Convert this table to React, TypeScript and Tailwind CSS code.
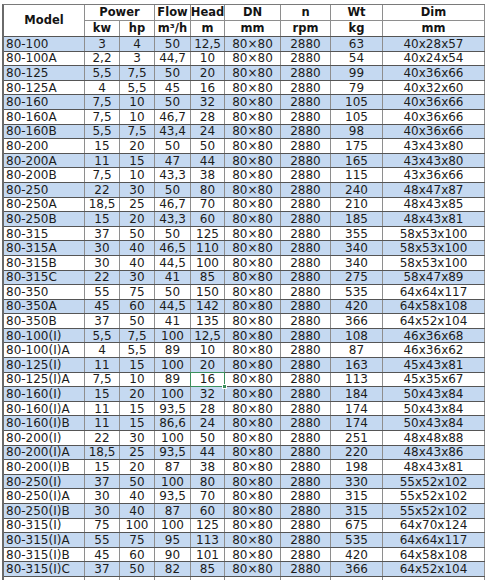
import React from "react";

type Row = [string, string, string, string, string, string];

const rows: Row[] = [
  ["80-100", "3", "4", "50", "12,5", "63|40x28x57"],
  ["80-100A", "2,2", "3", "44,7", "10", "54|40x24x54"],
  ["80-125", "5,5", "7,5", "50", "20", "99|40x36x66"],
  ["80-125A", "4", "5,5", "45", "16", "79|40x32x60"],
  ["80-160", "7,5", "10", "50", "32", "105|40x36x66"],
  ["80-160A", "7,5", "10", "46,7", "28", "105|40x36x66"],
  ["80-160B", "5,5", "7,5", "43,4", "24", "98|40x36x66"],
  ["80-200", "15", "20", "50", "50", "175|43x43x80"],
  ["80-200A", "11", "15", "47", "44", "165|43x43x80"],
  ["80-200B", "7,5", "10", "43,3", "38", "115|43x36x66"],
  ["80-250", "22", "30", "50", "80", "240|48x47x87"],
  ["80-250A", "18,5", "25", "46,7", "70", "210|48x43x85"],
  ["80-250B", "15", "20", "43,3", "60", "185|48x43x81"],
  ["80-315", "37", "50", "50", "125", "355|58x53x100"],
  ["80-315A", "30", "40", "46,5", "110", "340|58x53x100"],
  ["80-315B", "30", "40", "44,5", "100", "340|58x53x100"],
  ["80-315C", "22", "30", "41", "85", "275|58x47x89"],
  ["80-350", "55", "75", "50", "150", "535|64x64x117"],
  ["80-350A", "45", "60", "44,5", "142", "420|64x58x108"],
  ["80-350B", "37", "50", "41", "135", "366|64x52x104"],
  ["80-100(I)", "5,5", "7,5", "100", "12,5", "108|46x36x68"],
  ["80-100(I)A", "4", "5,5", "89", "10", "87|46x36x62"],
  ["80-125(I)", "11", "15", "100", "20", "163|45x43x81"],
  ["80-125(I)A", "7,5", "10", "89", "16", "113|45x35x67"],
  ["80-160(I)", "15", "20", "100", "32", "184|50x43x84"],
  ["80-160(I)A", "11", "15", "93,5", "28", "174|50x43x84"],
  ["80-160(I)B", "11", "15", "86,6", "24", "174|50x43x84"],
  ["80-200(I)", "22", "30", "100", "50", "251|48x48x88"],
  ["80-200(I)A", "18,5", "25", "93,5", "44", "220|48x43x86"],
  ["80-200(I)B", "15", "20", "87", "38", "198|48x43x81"],
  ["80-250(I)", "37", "50", "100", "80", "330|55x52x102"],
  ["80-250(I)A", "30", "40", "93,5", "70", "315|55x52x102"],
  ["80-250(I)B", "30", "40", "87", "60", "315|55x52x102"],
  ["80-315(I)", "75", "100", "100", "125", "675|64x70x124"],
  ["80-315(I)A", "55", "75", "95", "113", "535|64x64x117"],
  ["80-315(I)B", "45", "60", "90", "101", "420|64x58x108"],
  ["80-315(I)C", "37", "50", "82", "85", "366|64x52x104"],
];

const colW = [
  "w-[81px]",
  "w-[35px]",
  "w-[35px]",
  "w-[36px]",
  "w-[34px]",
  "w-[56px]",
  "w-[50px]",
  "w-[52px]",
  "w-[102px]",
];

const vline = "border-r border-[#8e8e8e]";

function DataRow({ cells, blue, selected }: { cells: string[]; blue: boolean; selected?: boolean }) {
  return (
    <div
      className={`flex h-[14.6px] shrink-0 border-b border-[#555555] ${
        blue ? "bg-[#c5d9f1]" : "bg-white"
      }`}
    >
      {cells.map((c, j) => (
        <div
          key={j}
          className={`${colW[j]} shrink-0 ${vline} flex items-center leading-[14px] ${
            j === 0 ? "justify-start pl-[2px]" : "justify-center"
          } ${j === 4 && selected ? "relative" : ""}`}
        >
          {c}
          {j === 4 && selected ? (
            <div className="pointer-events-none absolute -left-[1px] -top-[1px] -right-[1px] -bottom-[1px] z-10 border border-[#3c8f5c]">
              <div className="absolute -right-[3px] -bottom-[3px] h-[5px] w-[5px] bg-[#3c8f5c] border border-white" />
            </div>
          ) : null}
        </div>
      ))}
    </div>
  );
}

export default function App() {
  return (
    <div className="h-[580px] w-[488px] overflow-hidden bg-white pt-[4px] pl-[2px] font-['DejaVu_Sans','Verdana',sans-serif] text-[#1c1c1c]">
      <div className="w-[483px] border-l-2 border-t border-l-[#6a6a6a] border-t-[#7a7a7a]">
        {/* header */}
        <div className="flex h-[32px] border-b border-[#555555] bg-white text-[11.5px] font-bold text-[#141414]">
          <div className={`${colW[0]} shrink-0 ${vline} flex items-center justify-center`}>Model</div>
          <div className="flex flex-col">
            <div className="flex h-[16px] border-b border-[#8e8e8e]">
              <div className={`w-[70px] shrink-0 ${vline} flex items-center justify-center`}>Power</div>
              <div className={`${colW[3]} shrink-0 ${vline} flex items-center justify-center`}>Flow</div>
              <div className={`${colW[4]} shrink-0 ${vline} flex items-center justify-center`}>Head</div>
              <div className={`${colW[5]} shrink-0 ${vline} flex items-center justify-center`}>DN</div>
              <div className={`${colW[6]} shrink-0 ${vline} flex items-center justify-center`}>n</div>
              <div className={`${colW[7]} shrink-0 ${vline} flex items-center justify-center`}>Wt</div>
              <div className={`${colW[8]} shrink-0 ${vline} flex items-center justify-center`}>Dim</div>
            </div>
            <div className="flex h-[15px]">
              <div className={`${colW[1]} shrink-0 ${vline} flex items-center justify-center`}>kw</div>
              <div className={`${colW[2]} shrink-0 ${vline} flex items-center justify-center`}>hp</div>
              <div className={`${colW[3]} shrink-0 ${vline} flex items-center justify-center`}>m³/h</div>
              <div className={`${colW[4]} shrink-0 ${vline} flex items-center justify-center`}>m</div>
              <div className={`${colW[5]} shrink-0 ${vline} flex items-center justify-center`}>mm</div>
              <div className={`${colW[6]} shrink-0 ${vline} flex items-center justify-center`}>rpm</div>
              <div className={`${colW[7]} shrink-0 ${vline} flex items-center justify-center`}>kg</div>
              <div className={`${colW[8]} shrink-0 ${vline} flex items-center justify-center`}>mm</div>
            </div>
          </div>
        </div>
        {/* body */}
        <div className="flex flex-col text-[12px]">
          {rows.map((r, i) => {
            const [wt, dim] = r[5].split("|");
            const cells = [r[0], r[1], r[2], r[3], r[4], "80×80", "2880", wt, dim];
            return <DataRow key={i} cells={cells} blue={i % 2 === 0} selected={i === 23} />;
          })}
          <DataRow cells={["", "", "", "", "", "", "", "", ""]} blue={false} />
        </div>
      </div>
    </div>
  );
}
